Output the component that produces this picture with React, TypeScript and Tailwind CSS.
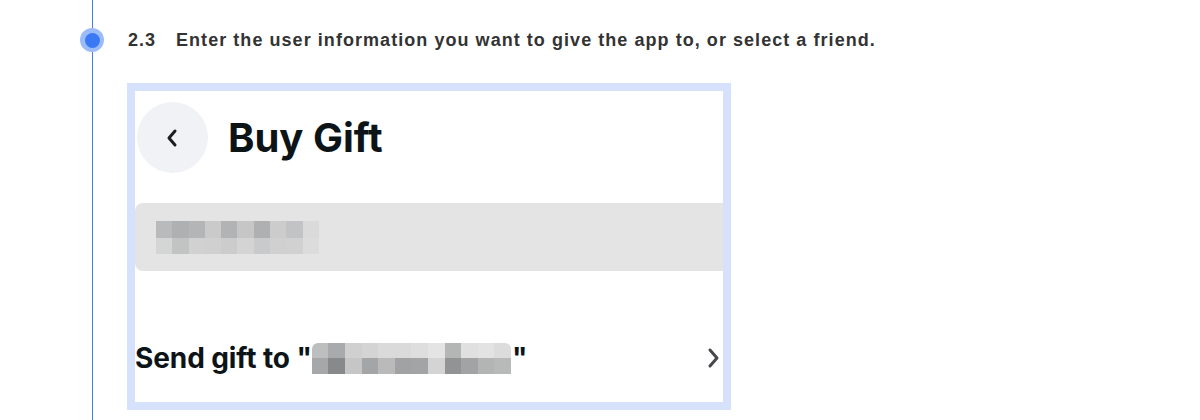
const barMosaic = [
  ['#b9babb', '#afb0b1', '#b4b5b6', '#c9cac9', '#b2b3b4', '#c5c6c5', '#afb0b2', '#cbcccb', '#c2c3c4', '#dadada'],
  ['#d4d6d5', '#c2c4c3', '#d0d1d0', '#cfd0cf', '#cbcccb', '#d3d4d3', '#c9cacb', '#cfd0cf', '#d0d1d0', '#dcdcdc'],
];

const nameMosaic = [
  ['#bdbebe', '#a9aaab', '#cfd0cf', '#d3d4d3', '#d9dad9', '#d9dad9', '#dddedd', '#e3e4e3', '#b4b5b5', '#dfe0df', '#e3e3e3', '#dcdcdc'],
  ['#a5a7a8', '#88898a', '#c5c6c5', '#a3a5a6', '#b9bab9', '#a0a2a3', '#a2a4a5', '#d3d4d3', '#919394', '#a2a3a4', '#b3b4b4', '#b8b9b9'],
];

const Mosaic = ({ rows, cell, rowH }: { rows: string[][]; cell: string; rowH: string }) => (
  <div className="flex flex-col">
    {rows.map((row, r) => (
      <div key={r} className="flex">
        {row.map((c, i) => (
          <div key={i} className={`${cell} ${rowH}`} style={{ backgroundColor: c }} />
        ))}
      </div>
    ))}
  </div>
);

export default function App() {
  return (
    <div className="w-[1200px] h-[420px] bg-white flex overflow-hidden">
      {/* timeline */}
      <div className="ml-[80px] w-[24px] flex flex-col items-center">
        <div className="w-px h-[28px] bg-[#3d7ef5]" />
        <div className="w-[24px] h-[24px] rounded-full bg-[#9bbcf9] flex items-center justify-center">
          <div className="w-[15px] h-[15px] rounded-full bg-[#3b78f4]" />
        </div>
        <div className="w-px flex-1 bg-[#3d7ef5]" />
      </div>

      <div className="ml-[23px] flex flex-col">
        <div
          className="pt-[28px] h-[52px] flex text-[18px] leading-6 font-bold text-[#333333] tracking-[1.05px]"
          style={{ fontFamily: '"Liberation Sans", Arial, sans-serif' }}
        >
          <span className="w-[49px] pl-px">2.3</span>
          <span>Enter the user information you want to give the app to, or select a friend.</span>
        </div>

        <div
          className="mt-[31px] w-[604px] h-[327px] border-8 border-[#d6e1fb] bg-white flex flex-col overflow-hidden"
          style={{ fontFamily: 'Inter, "Noto Sans", sans-serif' }}
        >
          <div className="mt-[11px] ml-[2px] flex items-center">
            <div className="w-[71px] h-[71px] rounded-full bg-[#f0f2f5] flex items-center justify-center">
              <svg width="14" height="20" viewBox="0 0 14 20" className="mr-[2px]">
                <path d="M10 3 L4 10 L10 17" fill="none" stroke="#1c1e21" strokeWidth="3" strokeLinecap="round" strokeLinejoin="round" />
              </svg>
            </div>
            <span className="ml-[20px] text-[40px] leading-[48px] font-bold text-[#0c1418]">Buy Gift</span>
          </div>

          <div className="mt-[30px] h-[68px] bg-[#e4e4e4] rounded-l-lg flex items-center pl-[21px] pt-px">
            <Mosaic rows={barMosaic} cell="w-[16.3px]" rowH="h-[16.5px]" />
          </div>

          <div className="mt-[70px] flex items-center">
            <span className="text-[28px] leading-[34px] font-bold text-[#0c1418] tracking-[-0.1px]">Send gift to "</span>
            <div className="rounded-t-[6px] overflow-hidden">
              <Mosaic rows={nameMosaic} cell="w-[16.6px]" rowH="h-[15.5px]" />
            </div>
            <span className="ml-px text-[28px] leading-[34px] font-bold text-[#0c1418]">"</span>
            <div className="flex-1" />
            <svg width="16" height="22" viewBox="0 0 16 22" className="mr-px">
              <path d="M4 3 L11 11 L4 19" fill="none" stroke="#46484b" strokeWidth="3" strokeLinecap="round" strokeLinejoin="round" />
            </svg>
          </div>
        </div>
      </div>
    </div>
  );
}
